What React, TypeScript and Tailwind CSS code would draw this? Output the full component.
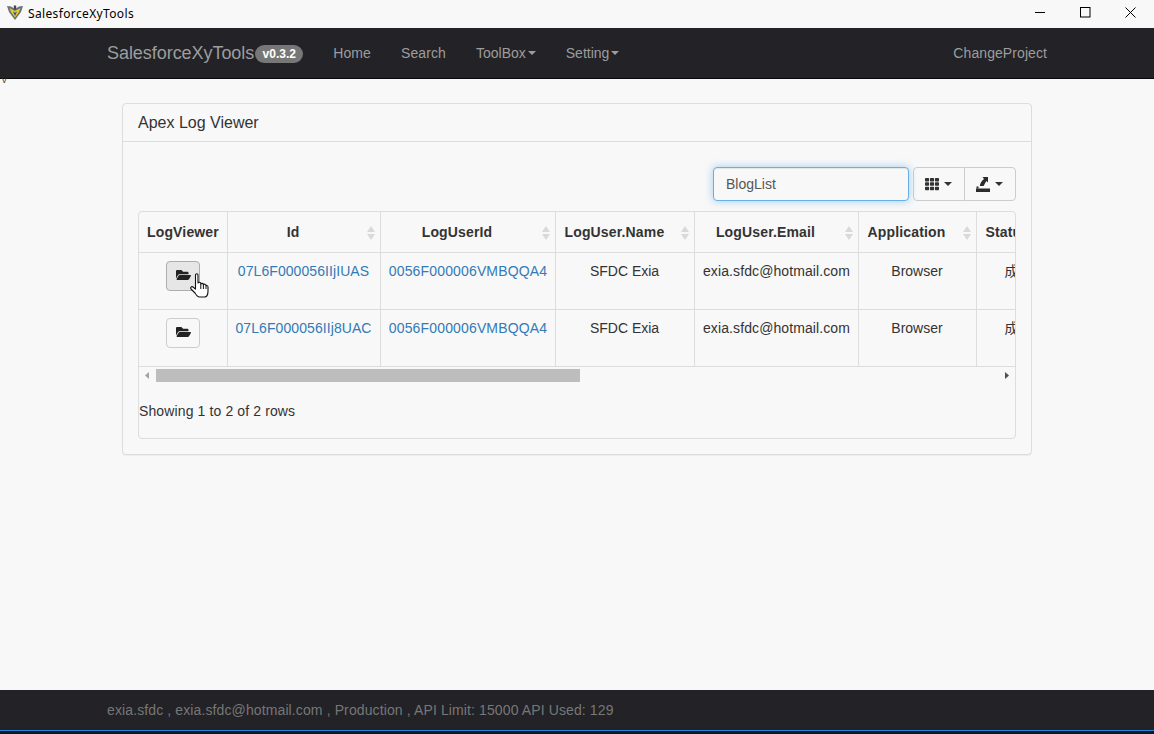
import { FaFolderOpen, FaTh } from "react-icons/fa";

const cols = [
  { label: "LogViewer", w: "w-[88px] min-w-[88px]", sort: false },
  { label: "Id", w: "w-[153px] min-w-[153px]", sort: true },
  { label: "LogUserId", w: "w-[175px] min-w-[175px]", sort: true },
  { label: "LogUser.Name", w: "w-[139px] min-w-[139px]", sort: true },
  { label: "LogUser.Email", w: "w-[164px] min-w-[164px]", sort: true },
  { label: "Application", w: "w-[118px] min-w-[118px]", sort: true },
  { label: "Status", w: "w-[80px] min-w-[80px]", sort: true },
];

const rows = [
  { id: "07L6F000056IIjIUAS", hover: true },
  { id: "07L6F000056IIj8UAC", hover: false },
];

function Logo() {
  return (
    <svg width="16" height="16" viewBox="0 0 16 16" className="block">
      <path d="M0 2 L4 2.5 L8 5 L12 2.5 L16 2 L14 8 L8 16 L2 8 Z" fill="#66727c" />
      <path d="M2.5 4 L8 7 L13.5 4 L12 8 L8 13.5 L4 8 Z" fill="#ecca1e" />
      <path d="M6 7.5 L8 8.8 L10 7.5 L8 12 Z" fill="#2f4a9f" />
      <path d="M6.8 1.5 H9.2 V5 L8 5.8 L6.8 5 Z" fill="#3a4a5a" />
    </svg>
  );
}

function SortArrows() {
  return (
    <svg width="8" height="14" viewBox="0 0 8 14" className="absolute right-[5px] top-[14px]">
      <path d="M4 0 L8 6 H0 Z M4 14 L0 8 H8 Z" fill="#d9d9d9" />
    </svg>
  );
}

function HandCursor() {
  return (
    <svg width="19" height="25" viewBox="0 0 19 25" className="absolute left-[23px] top-[11px] pointer-events-none">
      <path
        d="M5.5 2 C5.5 0.4 8 0.4 8 2 V10 C8.5 8.8 10.6 9 10.8 10.5 V11 C11.3 9.9 13.3 10.2 13.4 11.6 C14 10.7 15.9 11 16 12.6 C16.5 12.2 18 12.6 18 14 V18 C18 21.5 16.5 24 14.5 24 H9.5 C7.5 24 6.5 22.5 5 20 L1 16 C0 14.6 1.6 13 3 14 L5.5 16.2 Z"
        fill="#ffffff"
        stroke="#111111"
        strokeWidth="1.1"
        strokeLinejoin="round"
      />
      <path d="M10.8 11 V16 M13.4 11.6 V16 M16 12.6 V16" stroke="#111111" strokeWidth="1" fill="none" />
    </svg>
  );
}

function ExportIcon() {
  return (
    <svg width="14" height="15" viewBox="0 0 14 15" className="block">
      <path d="M6.5 0 H12 V5.5 L10.3 4 L7.6 9 H3.8 C4 6.5 5.6 4 8 2 Z" fill="#2b2b2b" />
      <path d="M0 11.5 H14 V15 H0 Z" fill="#2b2b2b" />
      <path d="M0.5 9.5 H2.5 V11.5 H0.5 Z" fill="#2b2b2b" />
    </svg>
  );
}

function Caret({ color = "border-t-[#333]", extra = "" }: { color?: string; extra?: string }) {
  return (
    <span
      className={`inline-block w-0 h-0 border-x-4 border-x-transparent border-t-4 ${color} ${extra}`}
    />
  );
}

export default function App() {
  return (
    <div className="w-[1154px] h-[734px] overflow-hidden flex flex-col bg-[#f8f8f8] font-['Liberation_Sans',Arial,sans-serif] text-sm text-[#333]">
      {/* window title bar */}
      <div className="h-7 shrink-0 flex items-center bg-[#f8f8f8]">
        <div className="ml-[7px] w-4 h-4 mb-[4px]">
          <Logo />
        </div>
        <span className="ml-[5px] mb-[1px] text-xs tracking-[0.36px] text-black font-['Noto_Sans',sans-serif]">SalesforceXyTools</span>
        <div className="ml-auto flex items-center mb-[3px]">
          <svg width="11" height="11" viewBox="0 0 11 11" className="mr-[34px]">
            <path d="M0 5.5 H10" stroke="#000" strokeWidth="1" />
          </svg>
          <svg width="11" height="11" viewBox="0 0 11 11" className="mr-[34px]">
            <rect x="0.5" y="0.5" width="9.5" height="9.5" fill="none" stroke="#000" strokeWidth="1" />
          </svg>
          <svg width="11" height="11" viewBox="0 0 11 11" className="mr-[18px]">
            <path d="M0.5 0.5 L10.5 10.5 M10.5 0.5 L0.5 10.5" stroke="#000" strokeWidth="1" />
          </svg>
        </div>
      </div>

      {/* navbar */}
      <nav className="h-[51px] shrink-0 flex items-center bg-[#222227] border-b border-[#080808] pl-[107px] pr-[107px] text-[#9d9d9d]">
        <span className="text-lg leading-none tracking-[-0.05px]">SalesforceXyTools</span>
        <span className="ml-px w-12 text-center inline-block rounded-[10px] bg-[#777] text-white text-xs font-bold leading-none py-[3px] mt-px">v0.3.2</span>
        <span className="ml-[30px] tracking-[0.1px]">Home</span>
        <span className="ml-[30px] tracking-[0.1px]">Search</span>
        <span className="ml-[30px] flex items-center">
          ToolBox
          <Caret color="border-t-[#9d9d9d]" extra="ml-[2px]" />
        </span>
        <span className="ml-[30px] flex items-center">
          Setting
          <Caret color="border-t-[#9d9d9d]" extra="ml-[2px]" />
        </span>
        <span className="ml-auto tracking-[0.08px]">ChangeProject</span>
      </nav>

      <div className="relative flex-1 min-h-0">
        <span className="absolute left-[2px] -top-[3px] text-[9px] leading-none text-[#4a3a3a]">v</span>
        {/* panel */}
        <div className="mt-6 ml-[122px] w-[910px] h-[352px] bg-[#f8f8f8] border border-[#ddd] rounded shadow-[0_1px_1px_rgba(0,0,0,0.05)] flex flex-col">
          <div className="h-[38px] shrink-0 border-b border-[#ddd] px-[15px] flex items-center text-base text-[#333]">
            Apex Log Viewer
          </div>
          <div className="flex-1 min-h-0 px-[15px] pt-[25px]">
            {/* toolbar */}
            <div className="flex justify-end h-[34px]">
              <div className="w-[196px] h-[34px] rounded border border-[#66afe9] shadow-[inset_0_1px_1px_rgba(0,0,0,0.075),0_0_8px_rgba(102,175,233,0.6)] px-3 flex items-center text-[#555] bg-[#f8f8f8]">
                BlogList
              </div>
              <div className="ml-1 flex h-[34px]">
                <div className="w-[52px] pr-[2px] border border-[#ccc] rounded-l flex items-center justify-center gap-[5px]">
                  <FaTh className="text-[#333] w-[14px] h-[14px]" />
                  <Caret />
                </div>
                <div className="w-[52px] pr-[2px] -ml-px border border-[#ccc] rounded-r flex items-center justify-center gap-[5px]">
                  <ExportIcon />
                  <Caret />
                </div>
              </div>
            </div>

            {/* table container */}
            <div className="mt-[10px] h-[228px] border border-[#ddd] rounded overflow-hidden flex flex-col">
              <div className="overflow-hidden shrink-0">
                <table className="border-collapse table-fixed w-[917px]">
                  <thead>
                    <tr className="h-[40px] border-b border-[#ddd]">
                      {cols.map((c, i) => (
                        <th
                          key={c.label}
                          className={`${c.w} relative p-0 font-bold text-center text-[#333] tracking-[0.15px] ${i > 0 ? "border-l border-[#ddd]" : ""}`}
                        >
                          <span className={`block whitespace-nowrap overflow-hidden ${c.sort ? "pl-[9px] pr-[30px]" : "px-2"}`}>{c.label}</span>
                          {c.sort && <SortArrows />}
                        </th>
                      ))}
                    </tr>
                  </thead>
                  <tbody>
                    {rows.map((r) => (
                      <tr key={r.id} className="h-[57px] border-b border-[#ddd] align-top">
                        <td className="relative p-0 pt-2 text-center">
                          <div
                            className={`relative mx-auto w-[34px] h-[30px] rounded border flex items-center justify-center ${
                              r.hover ? "bg-[#e6e6e6] border-[#adadad]" : "border-[#ccc]"
                            }`}
                          >
                            <FaFolderOpen className="text-[#222] w-[15px] h-[14px] ml-[2px] mb-[2px]" />
                            {r.hover && <HandCursor />}
                          </div>
                        </td>
                        <td className="border-l border-[#ddd] p-0 pt-2 text-center text-[#337ab7] leading-5 tracking-[0.08px]">{r.id}</td>
                        <td className="border-l border-[#ddd] p-0 pt-2 pl-px text-center text-[#337ab7] leading-5 tracking-[0.15px]">0056F000006VMBQQA4</td>
                        <td className="border-l border-[#ddd] p-0 pt-2 text-center leading-5">SFDC Exia</td>
                        <td className="border-l border-[#ddd] p-0 pt-2 pl-px text-center leading-5 tracking-[0.1px]">exia.sfdc@hotmail.com</td>
                        <td className="border-l border-[#ddd] p-0 pt-2 text-center leading-5">Browser</td>
                        <td className="border-l border-[#ddd] p-0 pt-2 pl-[28px] text-left leading-5 whitespace-nowrap font-['Liberation_Sans','Noto_Sans_CJK_SC',sans-serif]">成功</td>
                      </tr>
                    ))}
                  </tbody>
                </table>
              </div>

              {/* scrollbar */}
              <div className="h-[18px] shrink-0 flex items-center relative">
                <svg width="4" height="7" viewBox="0 0 4 7" className="ml-[6px]">
                  <path d="M4 0 V7 L0 3.5 Z" fill="#a3a3a3" />
                </svg>
                <div className="ml-[7px] w-[424px] h-[13px] bg-[#bdbdbd]" />
                <svg width="4" height="7" viewBox="0 0 4 7" className="ml-auto mr-[6px]">
                  <path d="M0 0 V7 L4 3.5 Z" fill="#505050" />
                </svg>
              </div>

              <div className="pt-4 leading-5 tracking-[0.12px]">Showing 1 to 2 of 2 rows</div>
            </div>
          </div>
        </div>
      </div>

      {/* footer */}
      <footer className="h-10 shrink-0 flex items-center bg-[#222227] pl-[107px] text-[#777] tracking-[0.115px]">
        exia.sfdc , exia.sfdc@hotmail.com , Production , API Limit: 15000 API Used: 129
      </footer>
      <div className="h-1 shrink-0 bg-[#04182c] border-t border-[#1f86dc]" />
    </div>
  );
}
